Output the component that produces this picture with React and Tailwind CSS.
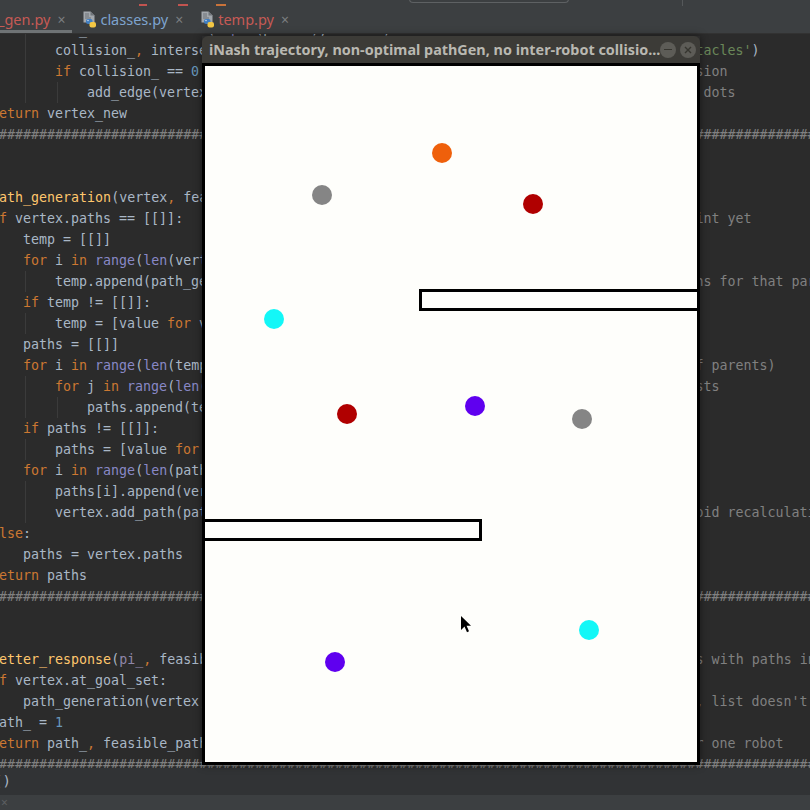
import React from "react";

const COLORS = {
  txt: "text-[#a9b7c6]",
  kw: "text-[#cc7832]",
  fn: "text-[#ffc66d]",
  bi: "text-[#8888c6]",
  num: "text-[#6897bb]",
  str: "text-[#6a8759]",
  cm: "text-[#808080]",
  par: "text-[#8f86a8]",
};

const HASH = "#".repeat(130);

// i = indent (cols), t = tokens, r = right tokens, at = [col, substring] anchor for r
const LINES = [
  { i: 12, t: [["new_vertex = Vertex(", "txt"], ["tuple", "bi"], ["(point_), vertex)", "txt"]] },
  {
    i: 12,
    t: [["collision_", "txt"], [",", "kw"], [" intersection_ = check_intersection(vertex.position", "txt"], [",", "kw"], [" point_", "txt"], [",", "kw"]],
    r: [["'obstacles'", "str"], [")", "txt"]],
    at: [93, "acles'"],
  },
  {
    i: 12,
    t: [["if", "kw"], [" collision_ == ", "txt"], ["0", "num"], [":", "txt"]],
    r: [["# add the edge only if there is no collision", "cm"]],
    at: [92, "sion"],
  },
  {
    i: 16,
    t: [["add_edge(vertex", "txt"], [",", "kw"], [" new_vertex)", "txt"]],
    r: [["# draw edge between the two dots", "cm"]],
    at: [93, "dots"],
  },
  { i: 4, t: [["return", "kw"], [" vertex_new", "txt"]] },
  { i: 0, t: [[HASH, "cm"]] },
  { i: 0, t: [] },
  { i: 0, t: [] },
  { i: 0, t: [["def", "kw"], [" ", "txt"], ["path_generation", "fn"], ["(vertex", "txt"], [",", "kw"], [" feasible_paths):", "txt"]] },
  {
    i: 4,
    t: [["if", "kw"], [" vertex.paths == [[]]:", "txt"]],
    r: [["# no paths generated from this point yet", "cm"]],
    at: [93, "nt yet"],
  },
  { i: 8, t: [["temp = [[]]", "txt"]] },
  { i: 8, t: [["for", "kw"], [" i ", "txt"], ["in", "kw"], [" ", "txt"], ["range", "bi"], ["(", "txt"], ["len", "bi"], ["(vertex.parents)):", "txt"]] },
  {
    i: 12,
    t: [["temp.append(path_generation(vertex.parents[i]", "txt"], [",", "kw"], [" feasible_paths))", "txt"]],
    r: [["# get all paths for that parent", "cm"]],
    at: [93, "s for that"],
  },
  { i: 8, t: [["if", "kw"], [" temp != [[]]:", "txt"]] },
  { i: 12, t: [["temp = [value ", "txt"], ["for", "kw"], [" value ", "txt"], ["in", "kw"], [" temp ", "txt"], ["if", "kw"], [" value != []]", "txt"]] },
  { i: 8, t: [["paths = [[]]", "txt"]] },
  {
    i: 8,
    t: [["for", "kw"], [" i ", "txt"], ["in", "kw"], [" ", "txt"], ["range", "bi"], ["(", "txt"], ["len", "bi"], ["(temp)):", "txt"]],
    r: [["# (loop over all combinations of parents)", "cm"]],
    at: [94, "parents)"],
  },
  {
    i: 12,
    t: [["for", "kw"], [" j ", "txt"], ["in", "kw"], [" ", "txt"], ["range", "bi"], ["(", "txt"], ["len", "bi"], ["(temp[i])):", "txt"]],
    r: [["# merge the path lists", "cm"]],
    at: [93, "ts"],
  },
  { i: 16, t: [["paths.append(temp[i][j])", "txt"]] },
  { i: 8, t: [["if", "kw"], [" paths != [[]]:", "txt"]] },
  { i: 12, t: [["paths = [value ", "txt"], ["for", "kw"], [" value ", "txt"], ["in", "kw"], [" paths ", "txt"], ["if", "kw"], [" value != []]", "txt"]] },
  { i: 8, t: [["for", "kw"], [" i ", "txt"], ["in", "kw"], [" ", "txt"], ["range", "bi"], ["(", "txt"], ["len", "bi"], ["(paths)):", "txt"]] },
  { i: 12, t: [["paths[i].append(vertex)", "txt"]] },
  {
    i: 12,
    t: [["vertex.add_path(paths[i])", "txt"]],
    r: [["# store in vertex to avoid recalculation", "cm"]],
    at: [93, "id recalc"],
  },
  { i: 4, t: [["else", "kw"], [":", "txt"]] },
  { i: 8, t: [["paths = vertex.paths", "txt"]] },
  { i: 4, t: [["return", "kw"], [" paths", "txt"]] },
  { i: 0, t: [[HASH, "cm"]] },
  { i: 0, t: [] },
  { i: 0, t: [] },
  {
    i: 0,
    t: [["def", "kw"], [" ", "txt"], ["better_response", "fn"], ["(", "txt"], ["pi_", "par"], [",", "kw"], [" feasible_paths", "txt"], [",", "kw"], [" vertex):", "txt"]],
    r: [["# find the vertices with paths in the goal set", "cm"]],
    at: [94, "with paths"],
  },
  { i: 4, t: [["if", "kw"], [" vertex.at_goal_set:", "txt"]] },
  {
    i: 8,
    t: [["path_generation(vertex", "txt"], [",", "kw"], [" feasible_paths)", "txt"]],
    r: [["# fills vertex.paths in place, list doesn't change", "cm"]],
    at: [94, "list doesn't"],
  },
  { i: 4, t: [["path_ = ", "txt"], ["1", "num"]] },
  {
    i: 4,
    t: [["return", "kw"], [" path_", "txt"], [",", "kw"], [" feasible_paths", "txt"]],
    r: [["# paths for one robot", "cm"]],
    at: [92, "r one robot"],
  },
  { i: 0, t: [[HASH, "cm"]] },
];

function CodeLine({ line }) {
  const levels = line.i / 4;
  const leftLen = line.i + line.t.reduce((s, [x]) => s + x.length, 0);
  let pad = "";
  if (line.r) {
    const rText = line.r.map(([x]) => x).join("");
    const start = line.at[0] - rText.indexOf(line.at[1]);
    pad = " ".repeat(Math.max(1, start - leftLen));
  }
  return (
    <div className="flex h-[21px] items-center whitespace-pre">
      {Array.from({ length: levels }).map((_, k) => (
        <span key={k} className="inline-block h-[21px] w-[32px] shrink-0 pl-[2px]">
          {k > 0 && <span className="block h-full w-px bg-[#3b3b3b]" />}
        </span>
      ))}
      {line.t.map(([x, c], k) => (
        <span key={k} className={COLORS[c]}>
          {x}
        </span>
      ))}
      {pad && <span>{pad}</span>}
      {line.r &&
        line.r.map(([x, c], k) => (
          <span key={"r" + k} className={COLORS[c]}>
            {x}
          </span>
        ))}
    </div>
  );
}

function PyIcon() {
  return (
    <svg width="15" height="17" viewBox="0 0 15 17">
      <path d="M1.5 0.5h7l4 4v7h-11z" fill="#a3a8ad" />
      <path d="M8.5 0.5v4h4" fill="#70757a" />
      <path d="M3 3h4M3 5h4M3 7h6" stroke="#6c7176" strokeWidth="1" />
      <rect x="4" y="8" width="6.5" height="5" rx="2" fill="#3f7dc0" />
      <rect x="7.5" y="11" width="6.5" height="5.5" rx="2" fill="#f3c744" />
      <circle cx="6" cy="9.5" r="0.7" fill="#dfe9f5" />
    </svg>
  );
}

function Tab({ name, color, icon, active }) {
  return (
    <div className="relative flex h-full items-center pr-[7px]">
      {icon && (
        <span className="mr-[3px] flex items-center">
          <PyIcon />
        </span>
      )}
      <span className={`text-[14.5px] ${color}`}>{name}</span>
      <span className="ml-[7px] text-[14px] text-[#7b7e80]">×</span>
      {active && <div className="absolute bottom-0 left-0 right-0 h-[3px] bg-[#6f7375]" />}
    </div>
  );
}

const DOTS = [
  [237, 87, "#ef600b"],
  [117, 129, "#858585"],
  [328, 138, "#b00000"],
  [69, 253, "#13f7f7"],
  [142, 348, "#b00000"],
  [270, 340, "#5f00ef"],
  [377, 353, "#858585"],
  [384, 564, "#13f7f7"],
  [130, 596, "#5f00ef"],
];

export default function App() {
  return (
    <div className="relative h-[810px] w-[810px] overflow-hidden bg-[#2b2b2b] font-['Noto_Sans',sans-serif]">
      {/* toolbar remnant */}
      <div className="flex h-[6px] items-end overflow-hidden bg-[#3c3f41]">
        <span className="ml-[139px] h-[2px] w-[8px] bg-[#c25450]" />
        <span className="ml-[31px] h-[2px] w-[10px] bg-[#c25450]" />
        <span className="ml-[28px] h-[2px] w-[10px] bg-[#c9733a]" />
        <span className="ml-[183px] mb-[3px] h-[4px] w-[160px] rounded-b-[4px] border border-t-0 border-[#5e6163]" />
        <span className="ml-[113px] h-[6px] w-px bg-[#55585a]" />
      </div>

      {/* tabs */}
      <div className="flex h-[28px] items-center gap-[10px] border-b border-[#323232] bg-[#3c3f41]">
        <div className="ml-[-2px] h-full">
          <Tab name="_gen.py" color="text-[#c65a55]" active />
        </div>
        <Tab name="classes.py" color="text-[#7ea4cf]" icon />
        <Tab name="temp.py" color="text-[#c65a55]" icon />
      </div>

      {/* editor */}
      <div className="h-[734px] overflow-hidden bg-[#2b2b2b]">
        <div className="ml-[-41px] mt-[-15px] font-['DejaVu_Sans_Mono',monospace] text-[13.3px]">
          {LINES.map((line, k) => (
            <CodeLine key={k} line={line} />
          ))}
        </div>
      </div>

      {/* bottom panels */}
      <div className="flex h-[27px] items-center bg-[#313335] font-['DejaVu_Sans_Mono',monospace] text-[14px] text-[#a9b7c6]">
        <span className="ml-[-6px]">()</span>
      </div>
      <div className="flex h-[15px] items-center bg-[#3c3f41] pl-[1px] text-[12px] leading-none text-[#5c5f61]">×</div>

      {/* pygame window */}
      <div className="absolute left-[202px] top-[36px] w-[498px] shadow-[0_0_8px_rgba(0,0,0,0.45)]">
        <div className="flex h-[27px] items-center justify-between rounded-t-[6px] bg-[#3c3b37] pl-[7px] pr-[5px]">
          <span className="whitespace-nowrap text-[14.4px] font-bold text-[#b9b8b1]">
            iNash trajectory, non-optimal pathGen, no inter-robot collisio...
          </span>
          <div className="flex gap-[4px]">
            <div className="flex h-[16px] w-[16px] items-center justify-center rounded-full bg-[#5d5c57]">
              <div className="h-[1.5px] w-[8px] bg-[#36352f]" />
            </div>
            <div className="flex h-[16px] w-[16px] items-center justify-center rounded-full bg-[#5d5c57]">
              <svg width="8" height="8" viewBox="0 0 8 8">
                <path d="M1 1L7 7M7 1L1 7" stroke="#36352f" strokeWidth="1.4" />
              </svg>
            </div>
          </div>
        </div>
        <div className="relative h-[702px] border-[3px] border-black bg-[#fefefb]">
          <svg width="492" height="696" className="block">
            <rect x="215.5" y="224.5" width="300" height="19" fill="none" stroke="#000" strokeWidth="3" />
            <rect x="-10" y="454.5" width="285.5" height="19" fill="none" stroke="#000" strokeWidth="3" />
            {DOTS.map(([cx, cy, c], k) => (
              <circle key={k} cx={cx} cy={cy} r="10" fill={c} />
            ))}
          </svg>
          <svg width="11" height="17" viewBox="0 0 11 17" className="absolute left-[256px] top-[550px]">
            <path d="M0 0V14L3.5 10.6L6 16.2L8 15.3L5.6 9.8H10Z" fill="#000" />
          </svg>
        </div>
      </div>
    </div>
  );
}
